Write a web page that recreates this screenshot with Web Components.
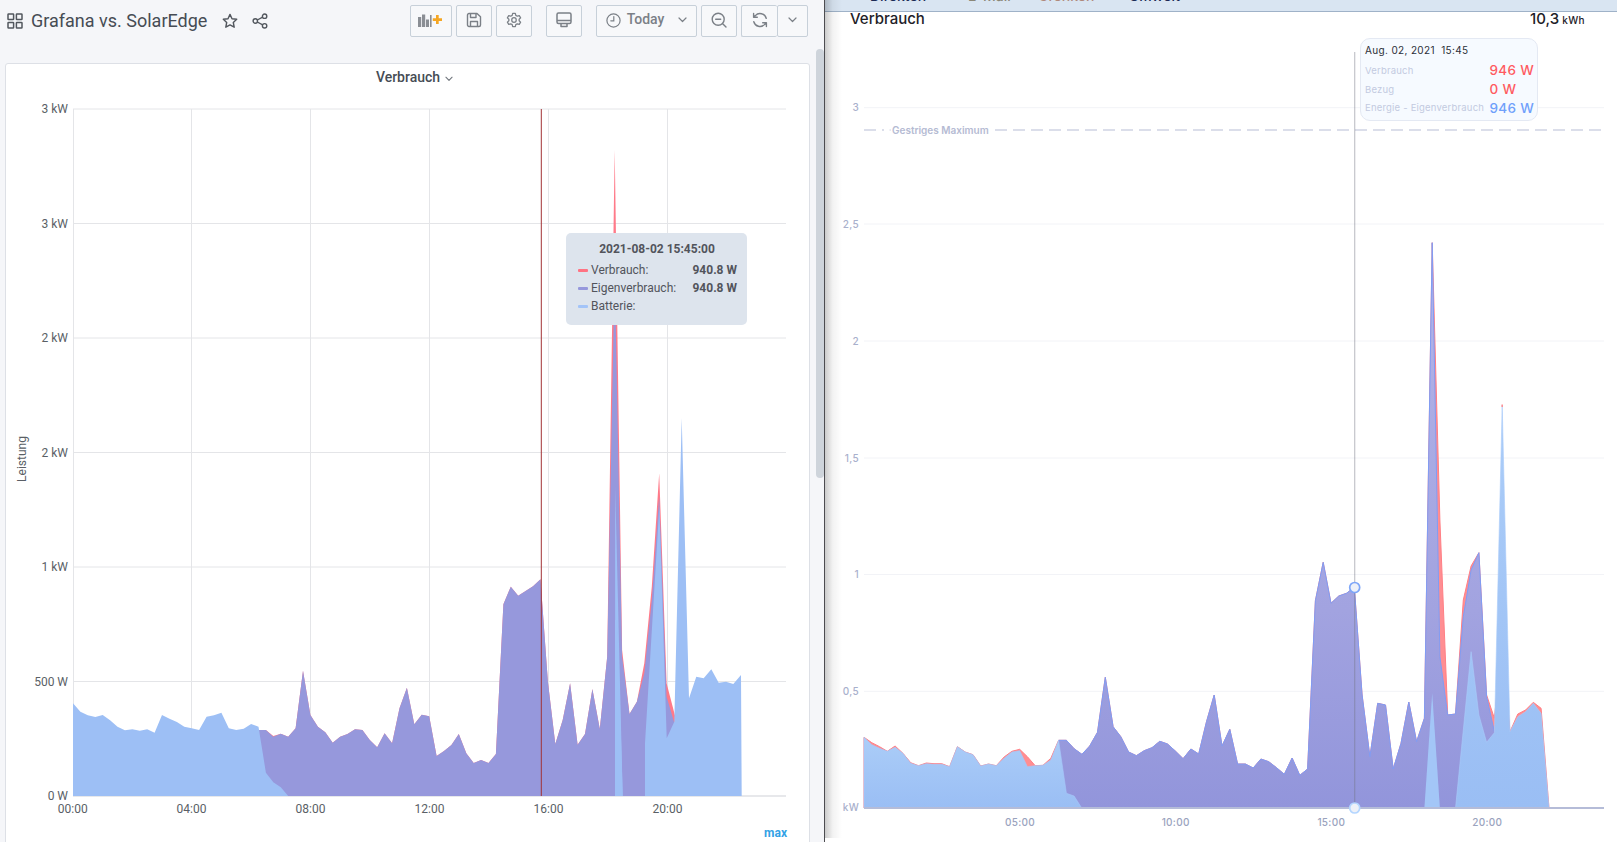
<!DOCTYPE html>
<html lang="de"><head><meta charset="utf-8"><title>Grafana vs. SolarEdge</title>
<style>
html,body{margin:0;padding:0;width:1617px;height:842px;overflow:hidden;background:#fff}
split-page{font-family:Roboto,"Liberation Sans",sans-serif}
</style></head><body>
<split-page>
  <gf-dashboard slot="left">
    <gf-toolbar title-text="Grafana vs. SolarEdge"></gf-toolbar>
    <gf-panel panel-title="Verbrauch">
      <gf-graph></gf-graph>
      <gf-tooltip slot="overlay"></gf-tooltip>
    </gf-panel>
  </gf-dashboard>
  <se-dashboard slot="right"></se-dashboard>
</split-page>
<script>
const I={
 apps:'<svg width="16" height="16" viewBox="0 0 16 16" fill="none" stroke="currentColor" stroke-width="1.5"><rect x="1" y="1" width="5.6" height="5.6" rx=".6"/><rect x="9.4" y="1" width="5.6" height="5.6" rx=".6"/><rect x="1" y="9.4" width="5.6" height="5.6" rx=".6"/><rect x="9.4" y="9.4" width="5.6" height="5.6" rx=".6"/></svg>',
 star:'<svg width="16" height="16" viewBox="0 0 16 16" fill="none" stroke="currentColor" stroke-width="1.4" stroke-linejoin="round"><path d="M8 1.4l2 4.3 4.7.6-3.4 3.2.9 4.7L8 11.9l-4.2 2.3.9-4.7L1.3 6.3 6 5.7z"/></svg>',
 share:'<svg width="16" height="16" viewBox="0 0 16 16" fill="none" stroke="currentColor" stroke-width="1.4"><circle cx="12.6" cy="3.2" r="2.2"/><circle cx="3.3" cy="8" r="2.2"/><circle cx="12.6" cy="12.8" r="2.2"/><path d="M5.3 7l5.4-2.8M5.3 9l5.4 2.8"/></svg>',
 add:'<svg width="26" height="14" viewBox="0 0 26 14"><g fill="#8a8e94"><rect x="0" y="4" width="3.2" height="10"/><rect x="4" y="1.5" width="3.2" height="12.5"/><rect x="8" y="6.5" width="3" height="7.5"/><rect x="12" y="2" width="1.6" height="12"/></g><path d="M18 2h2.700v3.200H24v2.700h-3.300V11H18V7.900h-3.200V5.200H18z" fill="#F5A623"/></svg>',
 save:'<svg width="16" height="16" viewBox="0 0 16 16" fill="none" stroke="currentColor" stroke-width="1.4" stroke-linejoin="round"><path d="M3 1.500h8l3.500 3.300V13a1.500 1.500 0 0 1-1.500 1.500H3A1.500 1.500 0 0 1 1.500 13V3A1.500 1.500 0 0 1 3 1.500z"/><path d="M4.500 1.700V5.500h5.500V1.700M4.500 14.300V9.500h7v4.800"/></svg>',
 gear:'<svg width="16" height="16" viewBox="0 0 24 24" fill="none" stroke="currentColor" stroke-width="1.9" stroke-linejoin="round"><circle cx="12" cy="12" r="3.400"/><path d="M10 2h4l.7 3 2.300 1.300 2.900-.9 2 3.400-2.200 2.100v2.200l2.200 2.100-2 3.400-2.900-.9L14.700 19l-.7 3h-4l-.7-3-2.300-1.300-2.900.9-2-3.400 2.200-2.100v-2.200L2.100 8.800l2-3.400 2.900.9L9.300 5z"/></svg>',
 tv:'<svg width="16" height="16" viewBox="0 0 16 16" fill="none" stroke="currentColor" stroke-width="1.5" stroke-linejoin="round"><rect x="1" y="1" width="14" height="10.500" rx="1.500"/><path d="M1 8.500h14M5 11.500v3h6v-3"/></svg>',
 clock:'<svg width="15" height="15" viewBox="0 0 15 15" fill="none" stroke="currentColor" stroke-width="1.2"><circle cx="7.500" cy="7.500" r="6.600"/><path d="M7.800 3.500v4.300H4.800" stroke-linecap="round"/></svg>',
 zoom:'<svg width="16" height="16" viewBox="0 0 16 16" fill="none" stroke="currentColor" stroke-width="1.4" stroke-linecap="round"><circle cx="7.200" cy="7.200" r="6"/><path d="M4.700 7.200h5M11.700 11.700l3.300 3.300"/></svg>',
 sync:'<svg width="16" height="16" viewBox="0 0 16 16" fill="none" stroke="currentColor" stroke-width="1.400" stroke-linejoin="round" stroke-linecap="round"><path d="M14.200 6.300A6.400 6.400 0 0 0 3.300 3.600L1.600 5.300M1.600 1.500v3.800h3.700M1.800 9.700a6.400 6.400 0 0 0 10.900 2.700l1.700-1.700M14.400 14.500v-3.800h-3.700"/></svg>',
 chev:'<svg width="9" height="6" viewBox="0 0 9 6" fill="none" stroke="currentColor" stroke-width="1.200" stroke-linecap="round" stroke-linejoin="round"><path d="M1 1l3.500 3.500L8 1"/></svg>'
};
const tpl=h=>{const t=document.createElement('template');t.innerHTML=h;return t};
class Base extends HTMLElement{
  constructor(){super();this.attachShadow({mode:'open'});this.shadowRoot.appendChild(this.constructor.t.content.cloneNode(true))}
}
class SplitPage extends Base{static t=tpl(`<style>:host{display:grid;grid-template-columns:824px 793px;width:1617px;height:842px;overflow:hidden}</style><slot name="left"></slot><slot name="right"></slot>`)}
class GfDashboard extends Base{static t=tpl(`<style>
:host{display:block;position:relative;height:842px;overflow:hidden;background:#F5F6F9}
.thumb{position:absolute;left:816px;top:49px;width:8px;height:429px;border-radius:4px;background:#CED4DB}
</style><slot></slot><div class="thumb"></div>`)}
class GfButton extends Base{static t=tpl(`<style>
:host{display:flex;align-items:center;justify-content:center;box-sizing:border-box;height:32px;padding-bottom:2px;width:var(--w,36px);background:#F7F8FA;border:1px solid #C7D0D9;border-radius:2px;color:#7B8087;flex:none}
</style><slot></slot>`)}
class GfToolbar extends Base{static t=tpl(`<style>
:host{display:flex;box-sizing:border-box;height:63px;padding:5px 16px 0 7px;align-items:flex-start;color:#464C54}
.ti{display:flex;align-items:center;height:32px;color:#52575E}
h1{margin:0 0 0 8px;font:400 18px/32px Roboto,sans-serif;color:#464C54;white-space:nowrap;width:177px}
.s{display:flex;margin-left:14px}.s+.s{margin-left:14px}
.r{margin-left:auto;display:flex;gap:4px}
.g14{margin-left:10px}
gf-button span{font:500 14px/16px Roboto,sans-serif;color:#7B8087;margin:-2px 14px 0 6px}
</style>
<div class="ti"><span id="a" style="display:flex"></span><h1></h1><span class="s" id="st"></span><span class="s" id="sh"></span></div>
<div class="r" id="r"></div>`);
  connectedCallback(){const s=this.shadowRoot;s.querySelector('h1').textContent=this.getAttribute('title-text');
   s.getElementById('a').innerHTML=I.apps;s.getElementById('st').innerHTML=I.star;s.getElementById('sh').innerHTML=I.share;
   s.getElementById('r').innerHTML=`<gf-button style="--w:42px">${I.add}</gf-button><gf-button>${I.save}</gf-button><gf-button>${I.gear}</gf-button>
   <gf-button class="g14">${I.tv}</gf-button><gf-button class="g14" style="--w:101px">${I.clock}<span>Today</span>${I.chev}</gf-button>
   <gf-button>${I.zoom}</gf-button><div style="display:flex"><gf-button style="border-right:0">${I.sync}</gf-button><gf-button style="--w:31px">${I.chev}</gf-button></div>`;}
}
class GfPanel extends Base{static t=tpl(`<style>
:host{display:block;position:relative;box-sizing:border-box;margin-left:5px;width:805px;height:800px;background:#fff;border:1px solid #DDE0E6;border-radius:3px}
header{display:flex;justify-content:center;align-items:center;gap:5px;height:26px;margin-bottom:2px;padding-left:14px;font:500 14px Roboto,sans-serif;color:#464C54;box-sizing:border-box}
header svg{color:#6f747b;margin-top:3px;width:8px}
::slotted([slot=overlay]){position:absolute;left:560px;top:169px}
</style><header><span></span>${I.chev}</header><slot></slot><slot name="overlay"></slot>`);
  connectedCallback(){this.shadowRoot.querySelector('span').textContent=this.getAttribute('panel-title')}
}
class GfTooltip extends Base{static t=tpl(`<style>
:host{display:block;box-sizing:border-box;width:181px;height:92px;padding:7px 10px 0 12px;background:#DDE4ED;border-radius:5px;font:400 12px/18px Roboto,sans-serif;color:#52545C}
.h{font-weight:700;text-align:center;line-height:18px;margin-bottom:3px;padding-right:1px}
.row{display:flex;align-items:center}
i{width:10px;height:3px;border-radius:1px;margin-right:3px}
b{margin-left:auto;font-weight:700}
</style><div class="h">2021-08-02 15:45:00</div>
<div class="row"><i style="background:#FF7383"></i>Verbrauch:<b>940.8 W</b></div>
<div class="row"><i style="background:#9698DC"></i>Eigenverbrauch:<b>940.8 W</b></div>
<div class="row"><i style="background:#A3C4F8"></i>Batterie:</div>`)}

const path=(pts,close=true)=>'M'+pts.map(p=>p[0].toFixed(1)+' '+p[1].toFixed(1)).join('L')+(close?'Z':'');
const LX=i=>73+7.42*i, LY=v=>540+v/3;
const lBlue=[490,515,526,531,525,541,560,571,568,572,568,578,525,536,546,560,565,570,530,526,518,565,570,566,552,560,698,727,742,768];
const lRed={25:570,26:570,27:588,28:581,29:590,30:565,31:392,32:525,33:560,34:577,35:608,36:590,37:582,38:568,39:570,40:600,41:622,42:580,43:610,44:505,45:443,46:553,47:524,48:529,49:648,50:633,51:615,52:582,53:640,54:669,55:660,56:669,57:642,58:193,59:140,60:167,61:153,62:139,63:118,64:425,65:612,66:540,67:430,68:614,69:582,70:447,71:567,72:350,73:-1170,74:330,75:522,76:485,77:370,78:140,79:-200,80:430,81:515,82:600,83:700,84:768};
const lPur=Object.assign({},lRed,{27:590,73:-810,74:350,77:400,78:180,79:-130,80:470,81:545,82:640,83:720,84:768});
const ser=(o,X,Y,base)=>{const k=Object.keys(o).map(Number);return [[X(k[0]),base],...k.map(i=>[X(i),Y(o[i])]),[X(k[k.length-1]),base]]};
class GfGraph extends Base{static t=tpl(`<style>:host{display:block;width:803px;height:750px}svg{display:block}text{font:400 12px Roboto,sans-serif;fill:#5A5F66}</style><svg width="803" height="750" viewBox="6 92 803 750"></svg>`);
  connectedCallback(){
   const B=796;let s='';
   [109,223.5,338,452.5,567,681.500].forEach(y=>s+=`<path d="M73 ${y}H786" stroke="#E4E5E8"/>`);
   s+=`<path d="M73 796H786" stroke="#DFE1E5" stroke-width="1.500"/>`;
   [73.500,191.500,310.500,429.500,548.500,667.500].forEach(x=>s+=`<path d="M${x} 109V796" stroke="#E4E5E8"/>`);
   const bl=lBlue.map((v,i)=>[LX(i),LY(v)]);
   s+=`<path d="${path(ser(lRed,LX,LY,B))}" fill="#FF7383" fill-opacity=".95"/>`;
   s+=`<path d="${path(ser(lPur,LX,LY,B))}" fill="#9698DC"/>`;
   s+=`<path d="${path([[LX(0),B],...bl,[LX(29),B]])}" fill="#9DBFF5"/>`;
   s+=`<path d="${path([[615,B],[615.2,487],[622.7,B]])}" fill="#9DBFF5"/><path d="M615 ${B}V620H617.5L622.700 ${B}Z" fill="#9DBFF5"/>`;
   const x3=v=>400+v/3;
   const b3=[[735,768],[735,610],[778,-100],[800,595],[823,545],[845,-366],[867,475],[889,410],[911,415],[934,388],[956,428],[978,425],[1000,432],[1023,405],[1025,768]];
   s+=`<path d="${path(b3.map(p=>[x3(p[0]),LY(p[1])]))}" fill="#9DBFF5"/>`;
   s+=`<path d="M541.300 109V796" stroke="#A23236"/>`;
   [['3 kW',109],['3 kW',223.5],['2 kW',338],['2 kW',452.5],['1 kW',567],['500 W',681.5],['0 W',796]].forEach(([t,y])=>s+=`<text x="68" y="${y+4}" text-anchor="end">${t}</text>`);
   [['00:00',72.7],['04:00',191.5],['08:00',310.500],['12:00',429.500],['16:00',548.500],['20:00',667.500]].forEach(([t,x])=>s+=`<text x="${x}" y="813" text-anchor="middle">${t}</text>`);
   s+=`<text transform="translate(26 459) rotate(-90)" text-anchor="middle">Leistung</text>`;
   s+=`<text x="787" y="837" text-anchor="end" style="font-weight:700;fill:#33A2E5">max</text>`;
   this.shadowRoot.querySelector('svg').innerHTML=s;
  }
}
const RX=i=>864+7.783*i, RY=v=>540+v/3, RB=808;
const rRed=[592,608,620,634,618,640,668,677,669,671,671,680,620,636,644,678,672,677,651,634,628,650,677,676,655,601,601,626,643,618,577,412,560,590,636,647,632,623,604,612,633,656,627,642,545,465,618,568,672,672,684,657,665,683,703,654,706,687,182,67,190,168,160,142,465,650,490,495,687,610,486,605,535,-892,-60,525,522,180,78,38,465,535,300,575,522,510,487,505,800];
const rPurO=Object.assign({},rRed,{74:350,77:230,78:90,80:470,81:575,82:578,83:600,84:620,85:640,86:660,87:680,88:800});
const rBlue=[592,614,625,634,622,640,670,677,671,673,673,680,620,636,644,678,672,677,655,636,632,680,677,676,660,601,760,768,805];
const rBlue3={76:805,77:570,78:335,79:525,80:607,81:578,82:-405,83:575,84:530,85:515,86:490,87:520,88:800};
class SeGraph extends Base{static t=tpl(`<style>:host{display:block;width:792px;height:806px}svg{display:block}text{font:500 10px Inter,"Liberation Sans",sans-serif;fill:#A9B0CC;letter-spacing:.3px}</style><svg width="792" height="806" viewBox="825 36 792 806"></svg>`);
  connectedCallback(){
   let s=`<defs><linearGradient id="p" x1="0" y1="0" x2="0" y2="1"><stop offset="0" stop-color="#B4B4E8"/><stop offset=".65" stop-color="#A2A3E0"/><stop offset="1" stop-color="#9295DB"/></linearGradient><linearGradient id="b" x1="0" y1="0" x2="0" y2="1"><stop offset="0" stop-color="#ABCDF8"/><stop offset="1" stop-color="#9ABEF4"/></linearGradient></defs>`;
   [['3',107.7],['2,5',224],['2',341],['1,5',458],['1',574.5],['0,5',691.3]].forEach(([t,y])=>{s+=`<path d="M864 ${y}H1604" stroke="#F2F3F7"/><text x="859" y="${y+3.5}" text-anchor="end">${t}</text>`});
   s+=`<text x="859" y="811" text-anchor="end">kW</text>`;
   s+=`<path d="M864 130H884M995 130H1604" stroke="#CFD3E3" stroke-width="1.500" stroke-dasharray="12 6"/><path d="M889.500 130h1.500" stroke="#CFD3E3"/>`;
   s+=`<text x="892" y="133.500" style="font-size:10px;letter-spacing:0;fill:#B5BBD3;font-weight:600">Gestriges Maximum</text>`;
   const red=rRed.map((v,i)=>[RX(i),RY(v)]);
   const pur=Object.keys(rPurO).map(Number).filter(i=>i>=25).map(i=>[RX(i),RY(rPurO[i])]);
   s+=`<path d="${path([[RX(0),RB],...red,[RX(88),RB]])}" fill="#FF8E92" stroke="#FF7F85"/>`;
   s+=`<path d="${path([[RX(25),RB],...pur,[RX(88),RB]])}" fill="url(#p)"/>`;
   s+=`<path d="${path(pur.slice(0,57),false)}" fill="none" stroke="#7F9DF5" stroke-width="1"/>`;
   s+=`<path d="${path([[RX(0),RB],...rBlue.map((v,i)=>[RX(i),RY(v)]),[RX(28),RB]])}" fill="url(#b)" stroke="#A6C8FA" stroke-width=".6"/>`;
   s+=`<path d="${path([[RX(72),RB],[RX(73),RY(460)],[RX(74),RB]])}" fill="#A3C6F7"/>`;
   const k=Object.keys(rBlue3).map(Number);
   s+=`<path d="${path([[RX(76),RB],...k.map(i=>[RX(i),RY(rBlue3[i])]),[RX(88),RB]])}" fill="url(#b)" stroke="#A9CBFA" stroke-width=".6"/>`;
   s+=`<path d="M1502.200 404.500v2.500" stroke="#FF8E92" stroke-width="1.500"/>`;
   s+=`<path d="M864 808H1604" stroke="#B5BCD8" stroke-width="2"/>`;
   s+=`<path d="M1354.700 52V808" stroke="#6f7280" stroke-opacity=".42" stroke-width="1.200"/>`;
   s+=`<circle cx="1354.700" cy="587.500" r="5" fill="#EEF1F8" stroke="#7EA6F8" stroke-width="1.700"/>`;
   s+=`<circle cx="1354.700" cy="808" r="5" fill="#EEF1F8" stroke="#B4D6FF" stroke-width="1.700"/>`;
   [['05:00',1020],['10:00',1175.700],['15:00',1331.300],['20:00',1487.300]].forEach(([t,x])=>s+=`<text x="${x}" y="826" text-anchor="middle" style="fill:#9AA3BE">${t}</text>`);
   this.shadowRoot.querySelector('svg').innerHTML=s;
  }
}
class SeTooltip extends Base{static t=tpl(`<style>
:host{display:block;position:absolute;left:535px;top:38px;box-sizing:border-box;width:178px;height:83px;padding:5px 4px 0 4px;background:#F6FAFF;border:1px solid #E4E9F3;border-radius:10px;font-family:Inter,"Liberation Sans",sans-serif}
.d{font:400 10px/13px Inter,sans-serif;letter-spacing:.35px;color:#2b2f38;white-space:pre;margin-bottom:4px}
.row{display:grid;grid-template-columns:124.500px 46px;align-items:center;height:18.700px;font-size:9.500px;letter-spacing:.2px;color:#C3CADF;white-space:nowrap}
b{font-weight:500;font-size:13.500px;letter-spacing:.3px;color:#FF5A5F}
b.u{color:#6FA0FB}
</style><div class="d">Aug. 02, 2021  15:45</div>
<div class="row"><span>Verbrauch</span><b>946 W</b></div>
<div class="row"><span>Bezug</span><b>0 W</b></div>
<div class="row"><span>Energie - Eigenverbrauch</span><b class="u">946 W</b></div>`)}
class SeNav extends Base{static t=tpl(`<style>
:host{display:block;box-sizing:border-box;height:12px;background:#D9E5F2;border-bottom:1px solid #9FB2C8;overflow:hidden}
.in{display:flex;margin-top:-12px;padding-left:45px;font:500 14px/16px Inter,sans-serif;white-space:nowrap}
span{display:block}
</style><div class="in">
<span style="color:#1B2A55;width:98px">Direkten</span>
<span style="color:#8B8778;width:70px">E-Mail</span>
<span style="color:#B0897D;width:91px">Grenken</span>
<span style="color:#1B2A55">Umwelt</span></div>`)}
class SeDashboard extends Base{static t=tpl(`<style>
:host{display:block;position:relative;height:842px;box-sizing:border-box;border-left:1px solid #4C4C50;background:#fff;overflow:hidden;font-family:Inter,"Liberation Sans",sans-serif}
.hd{display:flex;justify-content:space-between;height:24px;padding:0 32px 0 25px;color:#1E2127;font:500 15px/14px Inter,sans-serif}
.hd small{font-size:10px;letter-spacing:.4px;margin-left:3px}
.sh{position:absolute;left:0;top:0;width:17px;height:838px;background:linear-gradient(90deg,rgba(0,0,0,.2),rgba(0,0,0,.05) 45%,rgba(0,0,0,0));pointer-events:none}
</style><se-nav></se-nav><div class="hd"><span>Verbrauch</span><span>10,3<small>kWh</small></span></div><se-graph></se-graph><se-tooltip></se-tooltip><div class="sh"></div>`)}
[['split-page',SplitPage],['gf-dashboard',GfDashboard],['gf-button',GfButton],['gf-toolbar',GfToolbar],['gf-panel',GfPanel],['gf-tooltip',GfTooltip],['gf-graph',GfGraph],['se-graph',SeGraph],['se-tooltip',SeTooltip],['se-nav',SeNav],['se-dashboard',SeDashboard]].forEach(([n,c])=>customElements.define(n,c));
</script>
</body></html>
